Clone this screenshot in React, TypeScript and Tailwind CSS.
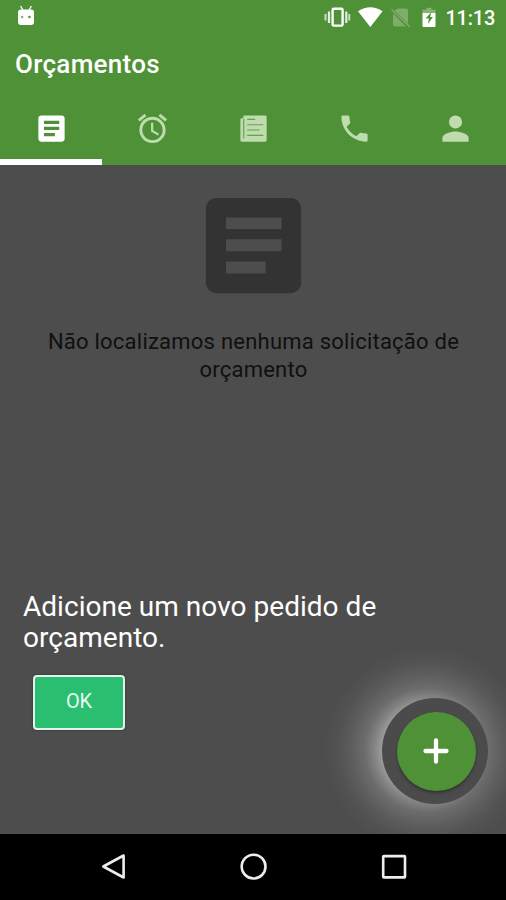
import type { ReactNode } from "react";

const ARTICLE =
  "M19 3H5c-1.1 0-2 .9-2 2v14c0 1.1.9 2 2 2h14c1.1 0 2-.9 2-2V5c0-1.1-.9-2-2-2zm-4.7 14.3H6.8V15h7.5zm3-4.2H6.8v-2.3h10.5zm0-4.2H6.8V6.7h10.5z";

function Tab({ active = false, children }: { active?: boolean; children: ReactNode }) {
  return (
    <button
      className={
        active
          ? "flex h-[75px] w-[102px] justify-center border-b-[6px] border-white pt-[21px] text-white"
          : "flex h-[75px] flex-1 justify-center pt-[21px] text-[#bfdcae]"
      }
    >
      <svg viewBox="0 0 24 24" className="size-[35px]" fill="currentColor">
        {children}
      </svg>
    </button>
  );
}

function StatusBar() {
  return (
    <div className="flex h-9 items-start justify-between text-white">
      <svg className="ml-[17px] mt-[5px] h-[21px] w-[18px]" viewBox="0 0 18 21" fill="currentColor">
        <path d="M3.5 1 6 5M14.5 1 12 5" stroke="currentColor" strokeWidth="1.3" />
        <rect x="1" y="4.5" width="16" height="15.5" rx="3" />
        <circle cx="5.2" cy="12" r="1.2" fill="#82b070" />
        <circle cx="12.4" cy="12" r="1.3" fill="#4f9136" />
      </svg>
      <div className="flex items-start pr-[11px]">
        <svg className="mt-[6px] h-[22px] w-[100px]" viewBox="324 6 100 22" fill="none">
          <rect x="332.6" y="8.8" width="10" height="16.8" rx="1.2" stroke="#fff" strokeWidth="2.4" />
          <path d="M329 11.5v11.5M346.3 11.5v11.5" stroke="#fff" strokeOpacity=".85" strokeWidth="2.2" />
          <path d="M325.5 14v6.5M349.3 14v6.5" stroke="#fff" strokeOpacity=".7" strokeWidth="2" />
          <path d="M358 11.2Q370.3 3.5 382.6 11.2L370.3 27z" fill="#fff" />
          <path d="M397.5 8.5h8.5q2 0 2 2v13.3L394.5 10.5zM393 13.2 406 26.5H395q-2 0-2-2z" fill="#7dad69" />
          <path d="m391.5 9.5 18.5 17.5" stroke="#7dad69" strokeWidth="1.5" />
        </svg>
        <svg className="ml-[-3px] mt-[6px] h-[22px] w-[16px]" viewBox="421 6 16 22">
          <path d="M422.5 13V9.7h4V7.8h5v1.9h4V13z" fill="#85b374" />
          <path d="M422.5 13h13v13q0 1-1 1h-11q-1 0-1-1z" fill="#fff" />
          <path d="m431.5 12-6 6.5h3.4l-1 5.5 5-7h-2.8z" fill="#4f9136" />
        </svg>
        <span className="ml-[9px] mt-[6px] text-[20px] font-medium leading-[24px] tracking-[-0.25px]">11:13</span>
      </div>
    </div>
  );
}

export default function App() {
  return (
    <div className="flex h-[900px] w-[506px] flex-col overflow-hidden bg-[#4d4d4d] font-['Roboto',sans-serif]">
      <header className="h-[165px] shrink-0 bg-[#4f9136] text-white">
        <StatusBar />
        <h1 className="h-[54px] pl-[15px] pt-[13px] text-[26px] font-medium leading-[31px] tracking-[0.3px]">
          Orçamentos
        </h1>
        <nav className="flex">
          <Tab active>
            <path d={ARTICLE} />
          </Tab>
          <Tab>
            <path d="m22 5.72-4.6-3.86-1.29 1.53 4.6 3.86L22 5.72zM7.88 3.39 6.6 1.86 2 5.71l1.29 1.53 4.59-3.85zM12.5 8H11v6l4.75 2.85.75-1.23-4-2.37V8zM12 4c-4.97 0-9 4.03-9 9s4.02 9 9 9a9 9 0 0 0 0-18zm0 16c-3.87 0-7-3.13-7-7s3.13-7 7-7 7 3.13 7 7-3.13 7-7 7z" />
          </Tab>
          <Tab>
            <path d="M6 3h14q1 0 1 1v16q0 1-1 1H4q-1 0-1-1V6q0-1 1-1h1V4q0-1 1-1z" />
            <path d="M5.3 5.5v13.3M7.7 5.7h5.5M7.7 9.4h11M7.7 13h8.5M7.7 16.7h11" stroke="#67a052" strokeWidth=".8" />
          </Tab>
          <Tab>
            <path d="M6.62 10.79c1.44 2.83 3.76 5.14 6.59 6.59l2.2-2.2c.27-.27.67-.36 1.02-.24 1.12.37 2.33.57 3.57.57.55 0 1 .45 1 1V20c0 .55-.45 1-1 1-9.39 0-17-7.61-17-17 0-.55.45-1 1-1h3.5c.55 0 1 .45 1 1 0 1.25.2 2.45.57 3.57.11.35.03.74-.25 1.02l-2.2 2.2z" />
          </Tab>
          <Tab>
            <circle cx="12" cy="7.5" r="4.5" />
            <path d="M12 14c-3 0-9 1.5-9 4.5V21h18v-2.5c0-3-6-4.5-9-4.5z" />
          </Tab>
        </nav>
      </header>

      <main className="relative flex h-[669px] shrink-0 flex-col overflow-hidden">
        <svg className="mx-auto mt-[17px] size-[127px] shrink-0 fill-[#333333]" viewBox="0 0 24 24">
          <path d={ARTICLE} />
        </svg>
        <p className="mt-[19px] pl-px text-center text-[22px] leading-[28px] tracking-[0.23px] text-[#101010]">
          Não localizamos nenhuma solicitação de
          <br />
          orçamento
        </p>
        <p className="mt-[207px] pl-[23px] text-[28px] leading-[31px] tracking-[0.03px] text-white">
          Adicione um novo pedido de
          <br />
          orçamento.
        </p>
        <button className="ml-[33px] mt-[22px] flex h-[55px] w-[92px] shrink-0 items-center justify-center rounded-[4px] border-2 border-[#e3f5e9] bg-[#29be70] pb-[3px] text-[20px] tracking-[-0.2px] text-[#e8faef] shadow-[0_0_2px_#301f2b]">
          OK
        </button>
        <div className="absolute left-[323px] top-[481px] size-[208px] rounded-full bg-[radial-gradient(circle_closest-side,#a0a0a0_0%,#a0a0a0_42%,#838383_51%,#6c6c6c_60%,#5c5c5c_74%,#525252_86%,#4d4d4d_100%)]" />
        <div className="absolute left-[382px] top-[533px] flex size-[106px] items-center justify-center rounded-full bg-[#4b4b4b] pl-[2px]">
          <button className="flex size-[79px] items-center justify-center rounded-full bg-[#4f9136] shadow-[0_2px_3px_#333]">
            <svg className="size-[26px]" viewBox="0 0 26 26" fill="none" stroke="#fff" strokeWidth="4.3" strokeLinecap="round">
              <path d="M13 2.5v21M2.5 13h21" />
            </svg>
          </button>
        </div>
      </main>

      <nav className="flex h-[66px] shrink-0 items-center justify-between bg-black pl-[100px] pr-[98px]">
        <svg className="size-[28px]" viewBox="0 0 28 28" fill="none" stroke="#ededed" strokeWidth="2.6" strokeLinejoin="round">
          <path d="M23.6 2.5v22L3.3 13.5z" />
        </svg>
        <svg className="size-[28px]" viewBox="0 0 28 28" fill="none" stroke="#ededed" strokeWidth="2.6">
          <circle cx="13.6" cy="13.6" r="11.9" />
        </svg>
        <svg className="size-[28px]" viewBox="0 0 28 28" fill="none" stroke="#ededed" strokeWidth="2.6">
          <rect x="3.2" y="3.1" width="21.8" height="21.3" rx=".7" />
        </svg>
      </nav>
    </div>
  );
}
